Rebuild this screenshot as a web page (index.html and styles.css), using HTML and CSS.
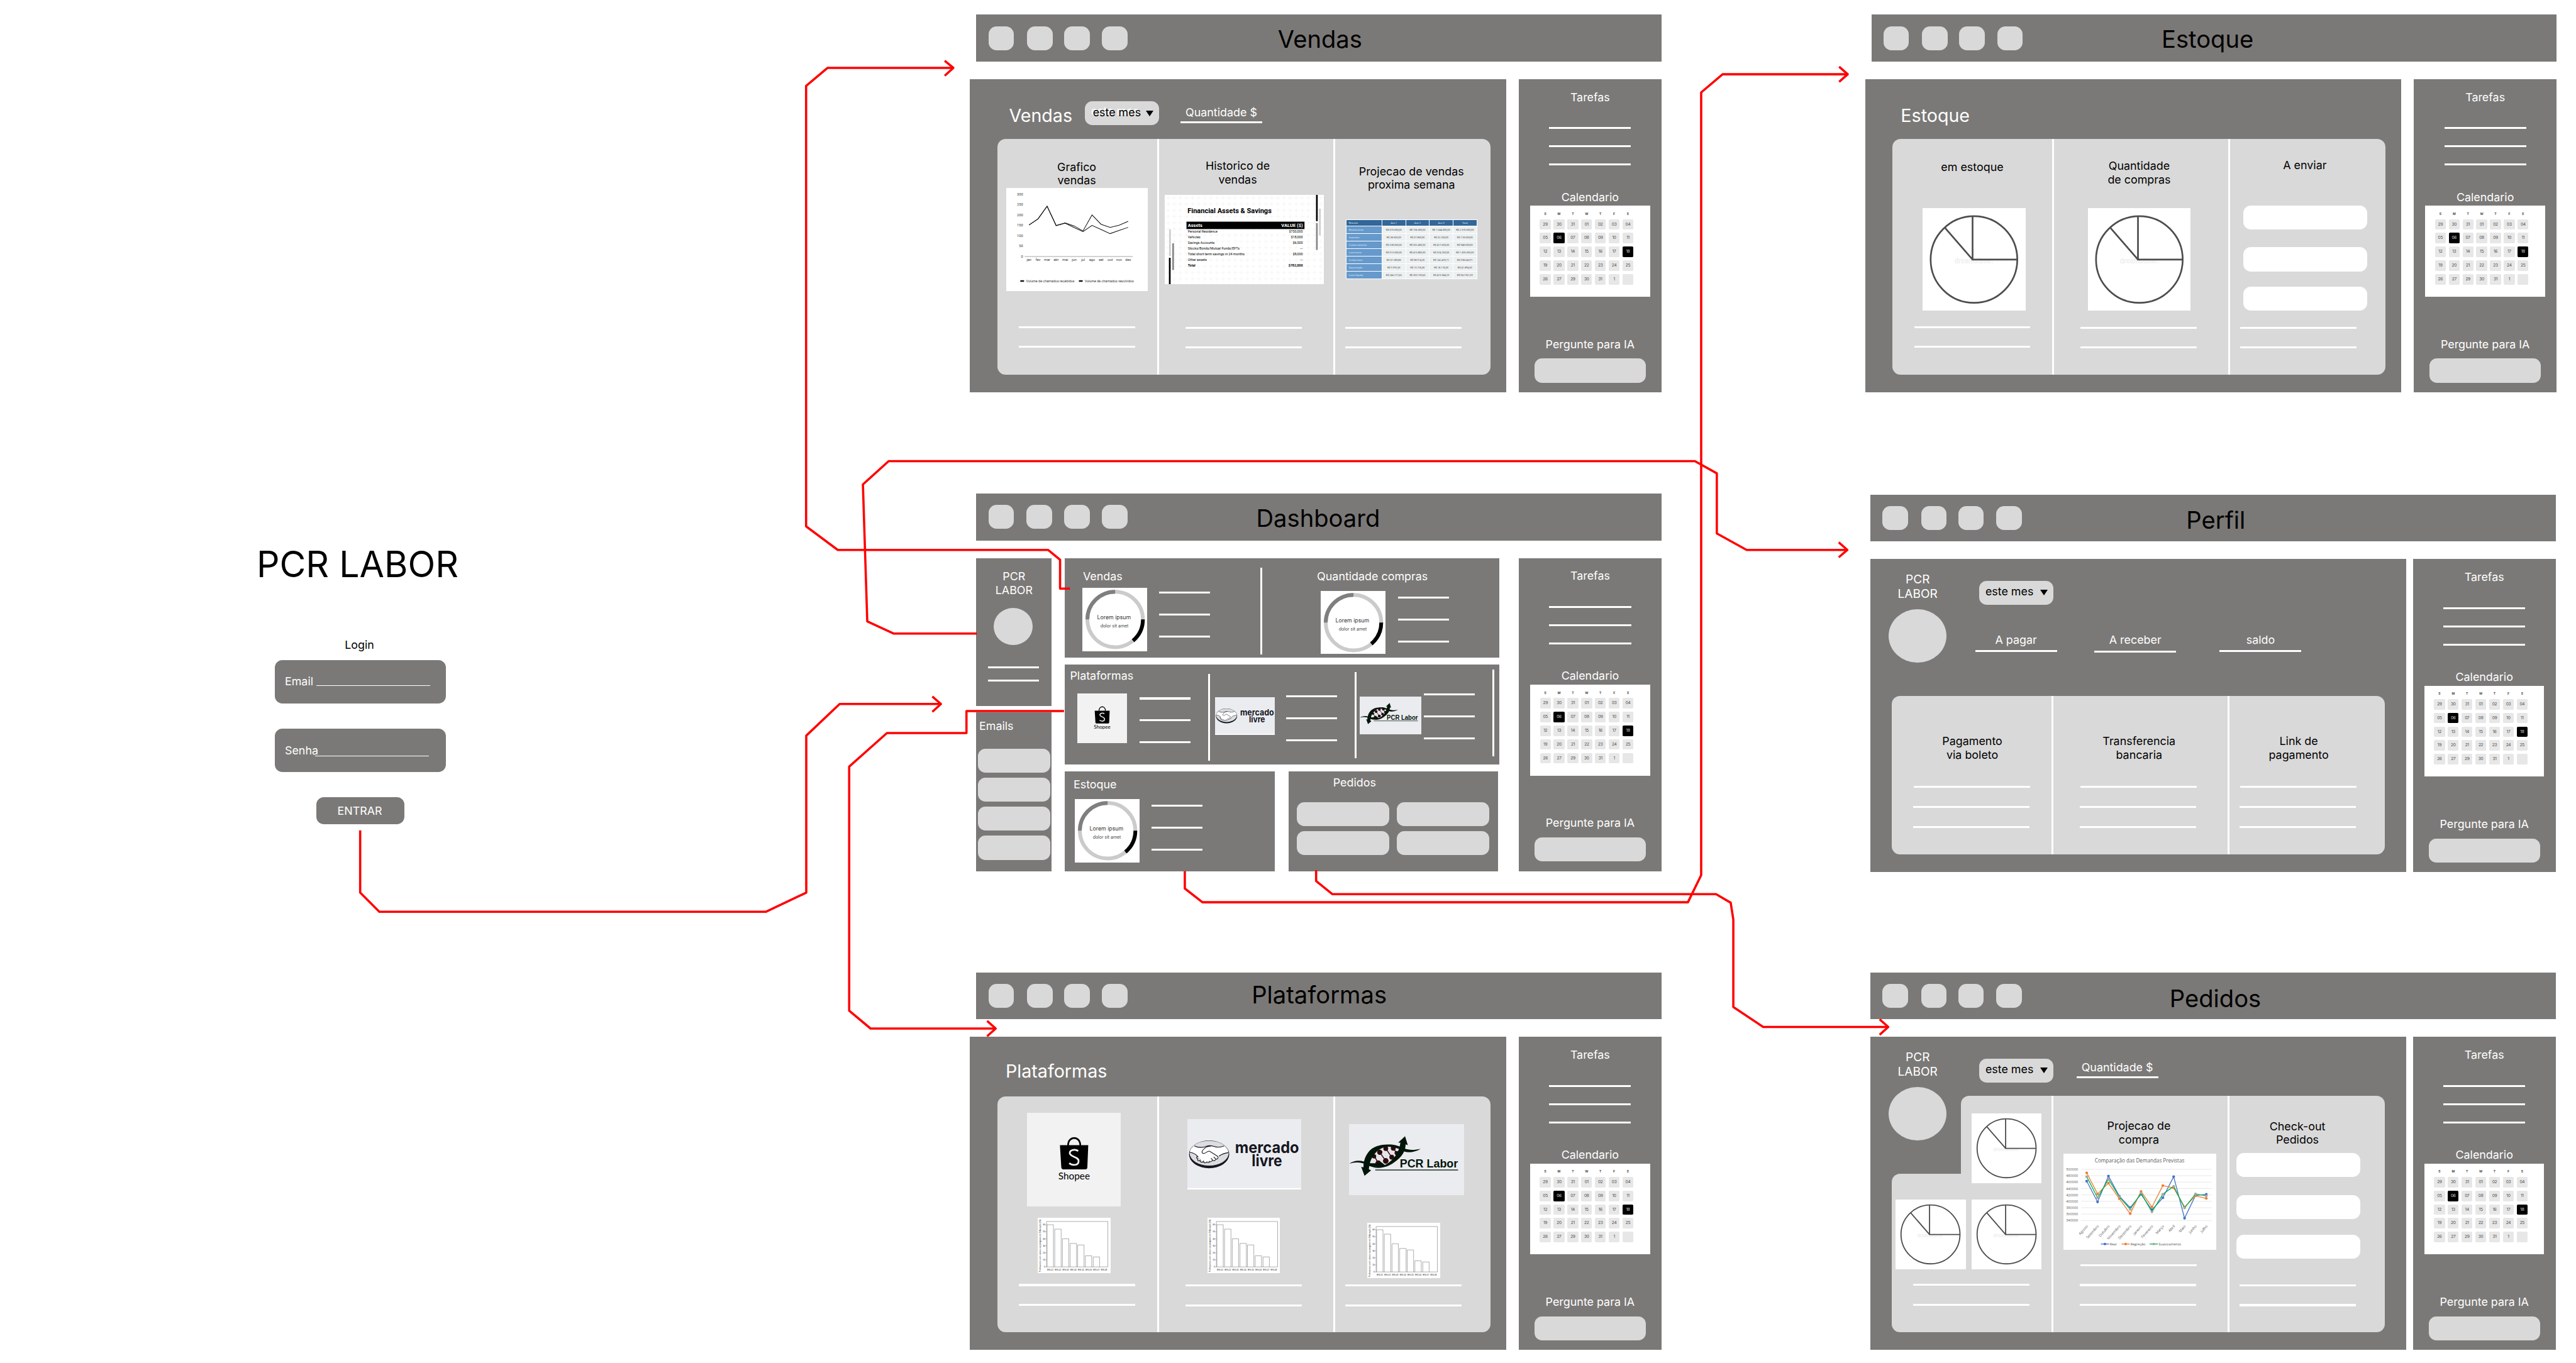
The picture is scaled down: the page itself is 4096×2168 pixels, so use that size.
FILE: index.html
```html
<!DOCTYPE html>
<html lang="pt-BR">
<head>
<meta charset="utf-8">
<title>PCR LABOR</title>
<link rel="stylesheet" href="styles.css">
</head>
<body>
<main class="board">

  <section class="login">
    <h1>PCR LABOR</h1>
    <h2>Login</h2>
    <div class="field"><span>Email</span><i></i></div>
    <div class="field field-senha"><span>Senha</span><i></i></div>
    <button class="enter">ENTRAR</button>
  </section>

  <section class="window wide vendas">
    <header class="bar"><div class="dots" data-part="dots"></div><h2>Vendas</h2></header>
    <div class="body">
      <div class="main">
        <div class="head">
          <h3>Vendas</h3>
          <div class="select"><span>este mes</span><b></b></div>
          <div class="metric">Quantidade $</div>
        </div>
        <div class="card">
          <div class="col c1">
            <h4>Grafico<br>vendas</h4>
            <div class="pic" data-part="line-chart"></div>
            <div class="rules"><i></i><i></i></div>
          </div>
          <div class="col c2">
            <h4>Historico de<br>vendas</h4>
            <div class="pic" data-part="assets"></div>
            <div class="rules"><i></i><i></i></div>
          </div>
          <div class="col c3">
            <h4>Projecao de vendas<br>proxima semana</h4>
            <div class="pic" data-part="projection"></div>
            <div class="rules"><i></i><i></i></div>
          </div>
        </div>
      </div>
      <aside class="side" data-part="side"></aside>
    </div>
  </section>

  <section class="window wide estoque">
    <header class="bar"><div class="dots" data-part="dots"></div><h2>Estoque</h2></header>
    <div class="body">
      <div class="main">
        <div class="head"><h3>Estoque</h3></div>
        <div class="card">
          <div class="col c1">
            <h4>em estoque</h4>
            <div class="pic" data-part="pie"></div>
            <div class="rules"><i></i><i></i></div>
          </div>
          <div class="col c2">
            <h4>Quantidade<br>de compras</h4>
            <div class="pic" data-part="pie"></div>
            <div class="rules"><i></i><i></i></div>
          </div>
          <div class="col c3">
            <h4>A enviar</h4>
            <div class="slots"><i></i><i></i><i></i></div>
            <div class="rules"><i></i><i></i></div>
          </div>
        </div>
      </div>
      <aside class="side" data-part="side"></aside>
    </div>
  </section>

  <section class="window dashboard">
    <header class="bar"><div class="dots" data-part="dots"></div><h2>Dashboard</h2></header>
    <div class="body">
      <div class="rail">
        <div class="profile">
          <p>PCR<br>LABOR</p>
          <div class="avatar"></div>
          <div class="short"><i></i><i></i></div>
        </div>
        <div class="emails">
          <p>Emails</p>
          <i></i><i></i><i></i><i></i>
        </div>
      </div>
      <div class="tiles">
        <div class="tile t-top">
          <div class="item i-vendas">
            <h4>Vendas</h4>
            <div class="media"><div class="pic" data-part="donut"></div><div class="short"><i></i><i></i><i></i></div></div>
          </div>
          <div class="divider"></div>
          <div class="item i-compras">
            <h4>Quantidade compras</h4>
            <div class="media"><div class="pic" data-part="donut"></div><div class="short"><i></i><i></i><i></i></div></div>
          </div>
        </div>
        <div class="tile t-plat">
          <div class="item i-shopee">
            <h4>Plataformas</h4>
            <div class="media"><div class="pic" data-part="shopee"></div><div class="short"><i></i><i></i><i></i></div></div>
          </div>
          <div class="divider"></div>
          <div class="item i-ml">
            <div class="media"><div class="pic" data-part="mercado"></div><div class="short"><i></i><i></i><i></i></div></div>
          </div>
          <div class="divider d2"></div>
          <div class="item i-pcr">
            <div class="media"><div class="pic" data-part="pcr"></div><div class="short"><i></i><i></i><i></i></div></div>
          </div>
          <div class="divider d3"></div>
        </div>
        <div class="pair">
          <div class="tile t-estoque">
            <div class="item i-estoque">
              <h4>Estoque</h4>
              <div class="media"><div class="pic" data-part="donut"></div><div class="short"><i></i><i></i><i></i></div></div>
            </div>
          </div>
          <div class="tile t-pedidos">
            <div class="item">
              <h4>Pedidos</h4>
              <div class="boxes"><i></i><i></i><i></i><i></i></div>
            </div>
          </div>
        </div>
      </div>
      <aside class="side" data-part="side"></aside>
    </div>
  </section>

  <section class="window perfil">
    <header class="bar"><div class="dots" data-part="dots"></div><h2>Perfil</h2></header>
    <div class="body">
      <div class="main">
        <div class="identity"><p>PCR<br>LABOR</p><div class="avatar"></div></div>
        <div class="head">
          <div class="select"><span>este mes</span><b></b></div>
          <div class="metrics">
            <div class="metric">A pagar</div>
            <div class="metric m2">A receber</div>
            <div class="metric m3">saldo</div>
          </div>
        </div>
        <div class="card">
          <div class="col c1"><h4>Pagamento<br>via boleto</h4><div class="rules"><i></i><i></i><i></i></div></div>
          <div class="col c2"><h4>Transferencia<br>bancaria</h4><div class="rules"><i></i><i></i><i></i></div></div>
          <div class="col c3"><h4>Link de<br>pagamento</h4><div class="rules"><i></i><i></i><i></i></div></div>
        </div>
      </div>
      <aside class="side" data-part="side"></aside>
    </div>
  </section>

  <section class="window wide plataformas">
    <header class="bar"><div class="dots" data-part="dots"></div><h2>Plataformas</h2></header>
    <div class="body">
      <div class="main">
        <div class="head"><h3>Plataformas</h3></div>
        <div class="card">
          <div class="col c1">
            <div class="pic logo" data-part="shopee"></div>
            <div class="pic bars" data-part="bars"></div>
            <div class="rules"><i></i><i></i></div>
          </div>
          <div class="col c2">
            <div class="pic logo" data-part="mercado"></div>
            <div class="pic bars" data-part="bars"></div>
            <div class="rules"><i></i><i></i></div>
          </div>
          <div class="col c3">
            <div class="pic logo" data-part="pcr"></div>
            <div class="pic bars" data-part="bars"></div>
            <div class="rules"><i></i><i></i></div>
          </div>
        </div>
      </div>
      <aside class="side" data-part="side"></aside>
    </div>
  </section>

  <section class="window pedidos">
    <header class="bar"><div class="dots" data-part="dots"></div><h2>Pedidos</h2></header>
    <div class="body">
      <div class="main">
        <div class="identity"><p>PCR<br>LABOR</p><div class="avatar"></div></div>
        <div class="head">
          <div class="select"><span>este mes</span><b></b></div>
          <div class="metric">Quantidade $</div>
        </div>
        <div class="card">
          <div class="col c1">
            <div class="step-top"><div class="pic" data-part="pie"></div></div>
            <div class="step-bottom">
              <div class="pies"><div class="pic" data-part="pie"></div><div class="pic" data-part="pie"></div></div>
              <div class="rules"><i></i><i></i></div>
            </div>
          </div>
          <div class="col c2">
            <h4>Projecao de<br>compra</h4>
            <div class="pic" data-part="demand"></div>
            <div class="rules"><i></i><i></i><i></i></div>
          </div>
          <div class="col c3">
            <h4>Check-out<br>Pedidos</h4>
            <div class="slots"><i></i><i></i><i></i></div>
            <div class="rules"><i></i><i></i></div>
          </div>
        </div>
      </div>
      <aside class="side" data-part="side"></aside>
    </div>
  </section>

  <svg class="flows" viewBox="0 0 6866 3634">
    <path d="M2852 1569.5H2825.5V1492.5L2794 1466.4H2233L2148.6 1403.5V229L2206 181H2541"/>
    <path d="M2518 162L2541 181L2518 202"/>
    <path d="M960 2214V2380L1011 2431H2042L2149 2380V1961.5L2238 1877H2508"/>
    <path d="M2485 1857L2508 1877L2485 1898"/>
    <path d="M2604 1689.4H2382.4L2311.6 1656.6L2300 1291.6L2368.6 1229.6H4517.6L4576 1262V1422.4L4655.5 1466.3H4924"/>
    <path d="M4901 1446L4924 1466.3L4901 1486"/>
    <path d="M3158 2323V2369L3205 2405.7H4499L4534.3 2333.5V246.4L4591.4 198H4925"/>
    <path d="M4902 178L4925 198L4902 218"/>
    <path d="M3508 2320V2349L3551 2384H4574L4613 2407L4620 2452V2685L4699.6 2738.2H5033"/>
    <path d="M5010 2718L5033 2738.2L5010 2759"/>
    <path d="M2836 1896H2576V1954.5H2364L2263.4 2044V2695L2320.4 2742.4H2654"/>
    <path d="M2631 2722L2654 2742.4L2631 2763"/>
  </svg>
</main>

<template id="dots"><i></i><i></i><i></i><i></i></template>

<template id="side">
  <p class="side-tasks">Tarefas</p>
  <div class="side-rules"><i></i><i></i><i></i></div>
  <p class="side-cal">Calendario</p>
  <div class="calendar">
    <b>S</b><b>M</b><b>T</b><b>W</b><b>T</b><b>F</b><b>S</b>
    <span>29</span><span>30</span><span>31</span><span>01</span><span>02</span><span>03</span><span>04</span>
    <span>05</span><span class="on">06</span><span>07</span><span>08</span><span>09</span><span>10</span><span>11</span>
    <span>12</span><span>13</span><span>14</span><span>15</span><span>16</span><span>17</span><span class="on">18</span>
    <span>19</span><span>20</span><span>21</span><span>22</span><span>23</span><span>24</span><span>25</span>
    <span>26</span><span>27</span><span>29</span><span>30</span><span>31</span><span>1</span><span></span>
  </div>
  <p class="side-ask">Pergunte para IA</p>
  <div class="side-input"></div>
</template>

<template id="pie">
  <svg viewBox="0 0 274 274" preserveAspectRatio="none" class="pie">
    <text x="85" y="147" font-size="19" textLength="104" lengthAdjust="spacingAndGlyphs" fill="#efefef">dreamstime.</text>
    <circle cx="137" cy="137" r="115.5"/>
    <path d="M133.3 22V137.4H253M59 51.7L133.3 137.4"/>
  </svg>
</template>

<template id="donut">
  <svg viewBox="0 0 173 169" preserveAspectRatio="none" class="donut">
    <circle cx="87.4" cy="84.3" r="74" stroke="#cbcbcb"/>
    <path d="M13.4 84.3A74 74 0 0 1 87.4 10.3" stroke="#7f7f7f"/>
    <path d="M161.4 84.3A74 74 0 0 1 135 141" stroke="#000"/>
    <text x="84.5" y="84.6" font-size="14.5" textLength="90" lengthAdjust="spacingAndGlyphs" fill="#333">Lorem ipsum</text>
    <text x="85.5" y="105" font-size="12" textLength="75" lengthAdjust="spacingAndGlyphs" fill="#444">dolor sit amet</text>
  </svg>
</template>

<template id="shopee">
  <svg viewBox="0 0 250 250" preserveAspectRatio="none" class="shopee">
    <path d="M87.8 86.3H163.3L160.8 146Q160.5 150.7 156 150.7H96.5Q92 150.7 91.5 146Z"/>
    <path d="M109.5 87C109.5 60.5 142 60.5 142 87" fill="none" stroke="#000" stroke-width="4.5"/>
    <path d="M136.5 102C129 96 114 98.5 114 107.5C114 118.5 137.5 116 137.5 128.5C137.5 141 121 141.5 112.5 134" fill="none" stroke="#f2f2f2" stroke-width="4.6"/>
    <text x="125.6" y="177.7" font-size="26" textLength="84" lengthAdjust="spacingAndGlyphs">Shopee</text>
  </svg>
</template>

<template id="mercado">
  <svg viewBox="0 0 303 188" preserveAspectRatio="none" class="mercado">
    <rect x="0" y="184" width="303" height="4" fill="#fff"/>
    <ellipse cx="58" cy="94" rx="53.6" ry="37" fill="#16171f"/>
    <ellipse cx="58" cy="91" rx="52" ry="33.2" fill="#dcdde1"/>
    <path d="M6.5 88C16 90 21 92 26 96L34 105C37 110 40 112 44 113L55 115.5C60 116 63 114 66 111.5L76 108C80 106 84 103 84 99C92 93 101 91 109.5 89.5C108 82 103 76 97 71.5C86 75.5 78 75 69 72C62 70 55 70.5 50 73C40 77 28 76 19 71.5C12 76 7 82 6.5 88Z" fill="#fff"/>
    <path d="M6.3 88.5C17 90.5 24 95 29 101M109.7 89.5C99 91 91 94 84 99M18.5 71.5C30 77 41 76.5 50 73C58 69.5 65 71 71 73C79 76 88 75.5 98 71.5M62 72.5C53 71.5 46 76.5 41 83C37 88 40 93 45 91.5C51 90 53 85 59 85.5L80 99C84 102 81 108 76 106.5C75 111 70 112 67 109.5C65 114 60 115 57 112.5M29 101C24 97 23 105 28 106C25 111 31 113 34 110C33 115 40 117 43 112.5C43 118 50 118.5 52 114C55 118 60 116 58.5 112M70 101L76 106.5M63 104L67.5 109.5" fill="none" stroke="#16171f" stroke-width="1.8"/>
    <text x="127" y="90" textLength="170.5" lengthAdjust="spacingAndGlyphs">mercado</text>
    <text x="171.5" y="125" textLength="81" lengthAdjust="spacingAndGlyphs">livre</text>
  </svg>
</template>

<template id="pcr">
  <svg viewBox="0 0 306.5 188" preserveAspectRatio="none" class="pcr">
    <path d="M89 61Q62 74 58 108Q75 117 92 112Q122 100 133 60Q112 54 89 61Z" fill="#e6e4ea"/>
    <path d="M82 75L98 98M68 86L78 104M98 65L114 88M118 64L127 77" stroke="#2a0a0a" stroke-width="2.5"/>
    <g fill="#2c0b0b"><circle cx="118" cy="64" r="6.5"/><circle cx="98" cy="65" r="6.5"/><circle cx="82" cy="75" r="7"/><circle cx="67" cy="86" r="5.5"/><circle cx="78" cy="104" r="7.5"/><circle cx="98" cy="98" r="7.5"/><circle cx="114" cy="88" r="6.5"/><circle cx="127" cy="77" r="5.5"/></g>
    <g fill="#02150a">
      <path d="M0.7 105.5C10 98 25 95.5 38 99C54 105 68 106 86 101L98 111C80 117 62 116 51 110C35 101 17 100 0.7 105.5Z"/>
      <path d="M93 56C117 52 132 57 148 65C161 70 176 69 191 65.5C178 74 160 77 148 73C133 66 118 58 95 61Z"/>
      <path d="M41.4 137.7L32.5 113.7L38.5 115C38 93 49 71 67 62C81 54.5 104 53 126 56C105 57 87 61 74 73C61 86 54 101 53 120.5L59 123Z"/>
      <path d="M149.4 32L131 49.5L137 49.5C135 71 121 93 104 104C93 111 79 116 62 114.5C82 120 104 114 119 103C140 88 150 75 151 54L156.8 56Z"/>
    </g>
    <text x="135.4" y="115.7" textLength="155" lengthAdjust="spacingAndGlyphs">PCR Labor</text>
    <rect x="70" y="121" width="220.7" height="2.2" fill="#02150a"/>
  </svg>
</template>

<template id="bars">
  <svg viewBox="0 0 194 146.6" preserveAspectRatio="none" class="barchart">
    <g class="frame">
      <path d="M23.7 9.9H187V131H23.7Z"/>
      <path d="M25 131V18.5H42V131M45.5 131V30.2H62.5V131M66 131V56H83V131M86.5 131V68.4H103.5V131M106.5 131V72.4H123.5V131M127 131V101.4H144V131M148 131V104.4H165V131"/>
      <path d="M20.7 18.5H23.7M20.7 37.2H23.7M20.7 56H23.7M20.7 74.7H23.7M20.7 93.5H23.7M20.7 112.2H23.7M20.7 131H23.7"/>
    </g>
    <g text-anchor="end" font-size="5.6">
      <text x="20" y="20.5">60</text><text x="20" y="39.3">50</text><text x="20" y="58">40</text><text x="20" y="76.8">30</text><text x="20" y="95.5">20</text><text x="20" y="114.2">10</text><text x="20" y="133">0</text>
    </g>
    <g text-anchor="middle" font-size="5.6">
      <text x="33.5" y="140">IES-01</text><text x="54" y="140">IES-02</text><text x="74.4" y="140">IES-03</text><text x="94.8" y="140">IES-04</text><text x="115.3" y="140">IES-05</text><text x="135.7" y="140">IES-06</text><text x="156.2" y="140">IES-07</text><text x="176.6" y="140">IES-08</text>
    </g>
    <text transform="translate(8.5 144.5) rotate(-90)" font-size="5.6" textLength="140" lengthAdjust="spacingAndGlyphs">Professores com cursos ou pesquisa em Educação (%)</text>
  </svg>
</template>

<template id="line-chart">
  <svg viewBox="0 0 377 274" preserveAspectRatio="none" class="linechart">
    <g text-anchor="end" font-size="9.5">
      <text x="44.6" y="19.8">300</text><text x="44.6" y="47.4">250</text><text x="44.6" y="75">200</text><text x="44.6" y="102.6">150</text><text x="44.6" y="130.2">100</text><text x="44.6" y="157.7">50</text><text x="44.6" y="185.3">0</text>
    </g>
    <path d="M49 182.7H337.5" stroke="#a5a5a5" stroke-width="1.8"/>
    <path d="M60.7 98.7L84.8 82.3L108.9 48.7L133 100.3L157 93L181.2 101.3L204.5 114.7L228.6 72L252.7 96.7L276.8 105L300.9 99.3L325 88.7"/>
    <path d="M60.7 98.7L84.8 82.3L108.9 48.7L133 100.3L157 94L181.2 105.7L204.5 116.3L228.6 100L252.7 110.7L276.8 121.7L300.9 113.3L325 105"/>
    <g text-anchor="middle" font-size="9.5">
      <text x="60.7" y="194">jan</text><text x="84.8" y="194">fev</text><text x="108.9" y="194">mar</text><text x="133" y="194">abr</text><text x="157" y="194">mai</text><text x="181" y="194">jun</text><text x="204.8" y="194">jul</text><text x="228.8" y="194">ago</text><text x="252.8" y="194">set</text><text x="276.9" y="194">out</text><text x="301" y="194">nov</text><text x="325" y="194">dez</text>
    </g>
    <path d="M37.5 248H47.5M193.7 248H203.7" class="mark"/>
    <text x="52.7" y="251" font-size="9.5" textLength="129.5" lengthAdjust="spacingAndGlyphs">Volume de chamados recebidos</text>
    <text x="209" y="251" font-size="9.5" textLength="131" lengthAdjust="spacingAndGlyphs">Volume de chamados resolvidos</text>
  </svg>
</template>

<template id="assets">
  <svg viewBox="0 0 424 238" preserveAspectRatio="none" class="assets">
    <defs><pattern id="dash-grid" x="0.9" y="-0.6" width="16.25" height="16.6" patternUnits="userSpaceOnUse"><path d="M8.1 0V16.6M0 8.3H16.25" stroke="#ededed" stroke-width="1" stroke-dasharray="11 5.4" stroke-dashoffset="-3"/></pattern></defs>
    <rect width="424" height="238" fill="url(#dash-grid)"/>
    <path d="M405.5 0V70M13.4 167.3V238" stroke="#000" stroke-width="4.5"/>
    <path d="M405.5 75V146.7M22.3 129V200" stroke="#858585" stroke-width="4.5"/>
    <path d="M413.5 37V108M14 91.7V162.7" stroke="#cdcdcd" stroke-width="4.5"/>
    <text x="60.7" y="48.3" font-size="19.5" font-weight="700" textLength="224" lengthAdjust="spacingAndGlyphs">Financial Assets &amp; Savings</text>
    <rect x="58" y="71.3" width="314.5" height="19.7" fill="#000"/>
    <g fill="#fff" font-weight="700" font-size="12">
      <text x="61.6" y="85.2" textLength="38.6" lengthAdjust="spacingAndGlyphs">Assets</text>
      <text x="310.7" y="85.2" textLength="57.5" lengthAdjust="spacingAndGlyphs">VALUE ($)</text>
    </g>
    <g font-size="9">
      <text x="61.6" y="101">Personal Residence</text><text x="61.6" y="116">Vehicles</text><text x="61.6" y="131">Savings Accounts</text><text x="61.6" y="145.8">Stocks/Bonds/Mutual Funds/EFTs</text><text x="61.6" y="160.8">Total short term savings in 24 months</text><text x="61.6" y="175.8">Other assets</text><text x="61.6" y="190.7" font-weight="700">Total</text>
    </g>
    <g font-size="9" text-anchor="end">
      <text x="368" y="101">$750,000</text><text x="368" y="116">$18,000</text><text x="368" y="131">$6,500</text><text x="368" y="145.8">---</text><text x="368" y="160.8">$8,000</text><text x="368" y="175.8">---</text><text x="368" y="190.7" font-weight="700">$782,000</text>
    </g>
  </svg>
</template>

<template id="projection">
  <table class="projection">
    <tr><th>Resumo</th><th>Ano 1</th><th>Ano 2</th><th>Ano 3</th><th>Total</th></tr>
    <tr><td>Receita bruta</td><td>R$ 570.000,00</td><td>R$ 756.000,00</td><td>R$ 1.044.000,00</td><td>R$ 2.370.000,00</td></tr>
    <tr><td>Impostos</td><td>R$ 28.500,00</td><td>R$ 37.800,00</td><td>R$ 52.200,00</td><td>R$ 118.500,00</td></tr>
    <tr><td>Custos variaveis</td><td>R$ 228.000,00</td><td>R$ 302.400,00</td><td>R$ 417.600,00</td><td>R$ 948.000,00</td></tr>
    <tr><td>Lucro bruto</td><td>R$ 313.500,00</td><td>R$ 415.800,00</td><td>R$ 574.200,00</td><td>R$ 1.303.500,00</td></tr>
    <tr><td>Custos fixos</td><td>R$ 57.289,85</td><td>R$ 98.914,35</td><td>R$ 142.439,71</td><td>R$ 298.643,91</td></tr>
    <tr><td>Depreciação</td><td>R$ 9.992,50</td><td>R$ 13.726,00</td><td>R$ 18.176,00</td><td>R$ 41.894,50</td></tr>
    <tr><td>Lucro líquido</td><td>R$ 246.217,65</td><td>R$ 303.159,65</td><td>R$ 413.584,29</td><td>R$ 962.961,59</td></tr>
  </table>
</template>

<template id="demand">
  <svg viewBox="0 0 406.6 257.5" preserveAspectRatio="none" class="demand">
    <text x="83.5" y="24" font-size="14" textLength="239" lengthAdjust="spacingAndGlyphs">Comparação das Demandas Previstas</text>
    <path d="M47 41.8H395.5M47 58.8H395.5M47 75.9H395.5M47 92.9H395.5M47 110H395.5M47 127H395.5M47 144.1H395.5M47 161.1H395.5M47 178.2H395.5" stroke="#d9d9d9" stroke-width="1"/>
    <g class="ylabels" font-size="9.5"></g>
    <g class="series"></g>
    <g class="months" font-size="9.8"></g>
    <g class="legend" font-size="9.2"></g>
  </svg>
</template>

<script src="script.js"></script>
</body>
</html>
```

FILE: styles.css
```css
/* 1rem equals 100 board units; the board is 68.66 x 36.34 rem */
html { font-size: 59.656px; }
* { box-sizing: border-box; }
body, h1, h2, h3, h4, p { margin: 0; font-weight: 400; }
body { background: #fff; font-family: Inter, "Liberation Sans", sans-serif; font-size: .3rem; line-height: 1.21; color: #fff; }
h4 { font-size: .3rem; }
svg { display: block; }
i, b { font-style: normal; }

.board { position: relative; width: 68.66rem; height: 36.34rem; overflow: hidden; }
.flows { position: absolute; left: 0; top: 0; width: 68.66rem; height: 36.34rem; }
.flows path { fill: none; stroke: #f00; stroke-width: 6; stroke-linejoin: round; }

/* Login */
.login { position: absolute; left: 6.8rem; top: 14.46rem; width: 5.56rem; display: flex; flex-direction: column; align-items: center; color: #000; }
.login h1 { font-size: .96rem; line-height: 1.16rem; white-space: nowrap; margin-left: -.1rem; }
.login h2 { font-size: .3rem; line-height: .36rem; margin-top: 1.39rem; }
.field { width: 4.564rem; height: 1.157rem; border-radius: .2rem; background: #7b7977; color: #fff; margin-top: .225rem; margin-left: .04rem; padding: .4rem 0 0 .275rem; display: flex; }
.field span { width: .837rem; line-height: .36rem; }
.field i { width: 3.03rem; height: .01rem; min-height: 1px; background: #fff; margin-top: .285rem; }
.field-senha { margin-top: .67rem; padding-top: .41rem; }
.field-senha span { width: .81rem; }
.field-senha i { margin-top: .32rem; }
.enter { width: 2.333rem; height: .72rem; margin-top: .67rem; margin-left: .05rem; border: 0; border-radius: .2rem; background: #7b7977; color: #fff; font: inherit; padding: .03rem .03rem 0 0; }

/* Windows */
.window { position: absolute; width: 18.265rem; display: flex; flex-direction: column; gap: .468rem; }
.wide { width: 18.43rem; }
.vendas { left: 25.855rem; top: .393rem; }
.estoque { left: 49.713rem; top: .393rem; }
.dashboard { left: 26.022rem; top: 13.162rem; }
.perfil { left: 49.854rem; top: 13.19rem; }
.plataformas { left: 25.855rem; top: 25.93rem; }
.pedidos { left: 49.854rem; top: 25.93rem; }

.bar { height: 1.248rem; background: #7b7977; display: grid; align-items: center; }
.wide .bar { margin-left: .165rem; }
.bar > * { grid-area: 1 / 1; }
.bar h2 { justify-self: center; color: #000; font-size: .64rem; line-height: .78rem; padding: .04rem 0 0 .06rem; }
.estoque h2 { padding-left: 0; padding-right: .34rem; }
.dashboard h2 { padding: .06rem .04rem 0 0; }
.perfil h2 { padding: .12rem 0 0 .15rem; }
.plataformas h2 { padding: 0 0 .06rem .02rem; }
.pedidos h2 { padding: .14rem 0 0 .12rem; }
.dots { display: flex; gap: .33rem; padding-left: .325rem; }
.dots i { width: .68rem; height: .64rem; border-radius: .21rem; background: #d9d9d9; }
.dots i:nth-child(2) { margin: 0 -.02rem 0 .02rem; }
.dashboard .dots i { margin: 0; }

.body { display: flex; height: 8.352rem; }
.main { width: 14.285rem; background: #7b7977; }

.side { width: 3.805rem; margin-left: auto; background: #7b7977; display: flex; flex-direction: column; align-items: center; }
.side p { line-height: .36rem; }
.side-tasks { margin-top: .3rem; }
.side-rules { margin-top: .62rem; display: flex; flex-direction: column; gap: .436rem; }
.side-rules i { width: 2.18rem; height: .051rem; background: #fff; }
.side-cal { margin-top: .66rem; }
.calendar { width: 3.19rem; height: 2.425rem; margin-top: .055rem; background: #fff; padding: .175rem 0 0 .255rem; display: grid; grid-template-columns: repeat(7, .29rem); grid-template-rows: .095rem repeat(5, .28rem); column-gap: .0775rem; row-gap: .086rem; color: #4a4a4a; font-size: .11rem; text-align: center; }
.calendar b { font-size: .085rem; line-height: .1rem; }
.calendar span { background: #e7e7e7; border-radius: .03rem; line-height: .27rem; letter-spacing: -.005rem; }
.calendar .on { background: #000; color: #ddd; }
.side-ask { margin-top: 1.085rem; }
.side-input { width: 2.97rem; height: .64rem; margin-top: .205rem; border-radius: .2rem; background: #d9d9d9; }

/* Panel heads */
.head h3 { font-size: .48rem; line-height: .58rem; }
.wide .head { height: 1.59rem; display: grid; grid-template-columns: 3.053rem 1.985rem 1fr; align-items: start; }
.vendas h3 { margin: .685rem 0 0 1.04rem; }
.estoque h3 { margin: .685rem 0 0 .95rem; }
.plataformas h3 { margin: .625rem 0 0 .95rem; }
.select { width: 1.98rem; height: .64rem; border-radius: .2rem; background: #d9d9d9; color: #000; display: flex; padding: .1rem 0 0 .165rem; line-height: .36rem; }
.select span { width: 1.46rem; }
.select b { width: 0; height: 0; margin-top: .13rem; border: .102rem solid transparent; border-top: .152rem solid #000; border-bottom: 0; }
.vendas .select { width: 1.987rem; margin-top: .583rem; padding: .13rem 0 0 .22rem; }
.vendas .select span { width: 1.42rem; text-shadow: -.05rem -.04rem 0 #fff; }
.metric { width: 2.18rem; text-align: center; line-height: .36rem; padding-bottom: .065rem; border-bottom: .051rem solid #fff; }
.vendas .metric { margin: .706rem 0 0 .57rem; }

/* Three-column cards */
.card { width: 13.15rem; height: 6.29rem; margin-left: .725rem; border-radius: .22rem; background: #d9d9d9; color: #000; display: grid; grid-template-columns: 4.26rem 4.69rem 4.2rem; overflow: hidden; }
.col { display: flex; flex-direction: column; align-items: flex-start; }
.c2, .c3 { border-left: .051rem solid #fff; }
.col h4 { text-align: center; line-height: .363rem; white-space: nowrap; }
.rules { display: flex; flex-direction: column; gap: .48rem; }
.rules i { width: 3.1rem; height: .051rem; background: #fff; }
.c1 .rules { margin-left: .58rem; }
.c2 .rules { margin-left: .71rem; }
.c3 .rules { margin-left: .27rem; }
.pic { flex: none; background: #fff; }
.pic svg { width: 100%; height: 100%; }

.vendas .c1 h4 { width: 4.24rem; margin-top: .569rem; }
.vendas .c1 .pic { width: 3.77rem; height: 2.74rem; margin: .025rem 0 0 .244rem; }
.vendas .c1 .rules { margin-top: .938rem; }
.vendas .c2 h4 { width: 4.2rem; margin-top: .549rem; }
.vendas .c2 .pic { width: 4.24rem; height: 2.383rem; margin: .225rem 0 0 .15rem; }
.vendas .c2 .rules { margin-top: 1.129rem; }
.vendas .c3 h4 { width: 4.08rem; margin-top: .686rem; }
.vendas .c3 .pic { width: 3.49rem; height: 1.586rem; margin: .748rem 0 0 .3rem; }
.vendas .c3 .rules { margin-top: 1.266rem; }

.estoque .pic { width: 2.74rem; height: 2.74rem; }
.estoque .c1 h4 { width: 4.26rem; margin-top: .569rem; }
.estoque .c1 .pic { margin: .918rem 0 0 .81rem; }
.estoque .c1 .rules { margin-top: .408rem; }
.estoque .c2 h4 { width: 4.54rem; margin-top: .549rem; }
.estoque .c2 .pic { margin: .575rem 0 0 .9rem; }
.estoque .c2 .rules { margin-top: .422rem; }
.estoque .c3 h4 { width: 3.99rem; margin-top: .534rem; }
.slots { display: flex; flex-direction: column; }
.slots i { width: 3.3rem; height: .64rem; border-radius: .2rem; background: #fff; }
.slots i:nth-child(2) { margin: .478rem 0 .413rem; }
.estoque .slots { margin: .883rem 0 0 .35rem; }
.estoque .c3 .rules { margin-top: .422rem; }

.plataformas .bars { width: 1.94rem; height: 1.466rem; }
.plataformas .c1 .logo { width: 2.5rem; height: 2.5rem; margin: .43rem 0 0 .8rem; }
.plataformas .c1 .bars { margin: .31rem 0 0 1.08rem; }
.plataformas .c1 .rules { margin-top: .297rem; }
.plataformas .c2 .logo { width: 3.03rem; height: 1.88rem; margin: .596rem 0 0 .756rem; }
.plataformas .c2 .bars { margin: .764rem 0 0 1.29rem; }
.plataformas .c2 .rules { margin-top: .309rem; }
.plataformas .c3 .logo { width: 3.065rem; height: 1.884rem; margin: .74rem 0 0 .38rem; }
.plataformas .c3 .bars { margin: .746rem 0 0 .865rem; }
.plataformas .c3 .rules { margin-top: .179rem; }

/* Perfil and Pedidos: identity block beside the head, card underneath */
.perfil .main, .pedidos .main { display: grid; grid-template-columns: 2.52rem 1fr; }
.perfil .main { grid-template-rows: 3.65rem 1fr; }
.pedidos .main { grid-template-rows: 1.573rem 1fr; }
.identity { grid-area: 1 / 1 / 3 / 2; display: flex; flex-direction: column; align-items: center; padding-top: .345rem; }
.identity p { font-size: .32rem; line-height: .39rem; text-align: center; }
.avatar { border-radius: 50%; background: #d9d9d9; }
.identity .avatar { width: 1.55rem; height: 1.44rem; margin-top: .205rem; }
.perfil .head, .pedidos .head { grid-area: 1 / 2; padding: .58rem 0 0 .38rem; }
.pedidos .head { display: flex; }
.pedidos .metric { margin: .046rem 0 0 .61rem; height: .475rem; }
.perfil .card, .pedidos .card { grid-area: 2 / 1 / 3 / 3; margin-left: .566rem; }
.metrics { display: flex; align-items: flex-start; margin: .76rem 0 0 -.11rem; }
.metrics .metric { padding-bottom: .095rem; }
.metrics .m2 { margin: -.01rem 1.16rem 0 1rem; padding-bottom: .122rem; }
.perfil .card { height: 4.23rem; }
.perfil .col h4 { margin-top: 1.03rem; width: 4.3rem; }
.perfil .c2 h4 { width: 4.57rem; }
.perfil .c3 h4 { width: 3.7rem; }
.perfil .rules { margin-top: .64rem; gap: .486rem; }
.perfil .rules i:first-child, .pedidos .c2 .rules i:first-child { margin-left: .018rem; }

.pedidos .card { height: 6.31rem; background: none; overflow: visible; }
.pedidos .c2, .pedidos .c3 { background: #d9d9d9; }
.pedidos .c3 { border-radius: 0 .22rem .22rem 0; }
.step-top { width: 2.42rem; height: 2.08rem; margin-left: 1.84rem; padding: .466rem 0 0 .284rem; background: #d9d9d9; border-radius: .22rem 0 0 0; }
.step-bottom { width: 4.26rem; height: 4.23rem; padding-top: .687rem; background: #d9d9d9; border-radius: .22rem 0 0 .22rem; }
.pedidos .c1 .pic { width: 1.864rem; height: 1.86rem; position: relative; z-index: 1; }
.pies { display: flex; gap: .154rem; margin-left: .11rem; }
.pedidos .c1 .rules { margin-top: .388rem; }
.pedidos .c2 h4 { width: 4.56rem; margin-top: .619rem; }
.pedidos .c2 .pic { width: 4.066rem; height: 2.575rem; margin: .19rem 0 0 .27rem; }
.pedidos .c2 .rules { margin-top: .375rem; gap: .484rem; }
.pedidos .c3 h4 { width: 3.63rem; margin-top: .629rem; }
.pedidos .slots { margin: .175rem 0 0 .19rem; }
.pedidos .c3 .rules { margin-top: .685rem; }

/* Dashboard */
.rail { width: 2.012rem; display: flex; flex-direction: column; gap: .172rem; text-align: center; }
.profile { height: 3.94rem; background: #7b7977; padding-top: .308rem; display: flex; flex-direction: column; align-items: center; }
.profile .avatar { width: 1.04rem; height: .98rem; margin-top: .3rem; margin-right: .03rem; }
.profile .short { margin: .575rem .03rem 0 0; gap: .3rem; }
.emails { flex: 1; background: #7b7977; padding: .18rem .048rem 0; display: flex; flex-direction: column; gap: .133rem; }
.emails p { text-align: left; padding-left: .03rem; line-height: .363rem; margin-bottom: .301rem; }
.emails i, .boxes i { height: .64rem; border-radius: .2rem; background: #d9d9d9; }
.tiles { margin-left: .34rem; width: 11.6rem; display: flex; flex-direction: column; gap: .18rem; }
.tile { width: 11.585rem; height: 2.663rem; background: #7b7977; display: flex; align-items: flex-start; }
.t-plat { margin-left: .012rem; }
.pair { display: flex; gap: .36rem; }
.t-estoque { width: 5.61rem; }
.t-pedidos { width: 5.586rem; }
.divider { width: .05rem; height: 2.31rem; margin-top: .255rem; background: #fff; }
.d2 { margin-top: .193rem; }
.d3 { margin-top: .13rem; }
.item h4 { line-height: .363rem; }
.media { display: flex; align-items: flex-start; }
.short { display: flex; flex-direction: column; gap: .535rem; }
.short i { width: 1.357rem; height: .051rem; background: #fff; }
.i-vendas, .i-compras { padding-top: .308rem; }
.i-vendas .pic, .i-compras .pic, .i-estoque .pic { width: 1.73rem; height: 1.69rem; }
.i-vendas { width: 5.22rem; padding-left: .47rem; }
.i-vendas h4 { padding-left: .02rem; }
.i-vendas .media { margin-top: .133rem; }
.i-vendas .short { margin: .095rem 0 0 .32rem; }
.i-compras { padding-left: 1.46rem; }
.i-compras .media { margin: .202rem 0 0 .1rem; }
.i-compras .short { margin: .157rem 0 0 .33rem; }
.i-shopee { width: 3.82rem; padding: .115rem 0 0 .135rem; }
.i-shopee .media { margin: .292rem 0 0 .192rem; }
.i-shopee .pic { width: 1.32rem; height: 1.33rem; }
.i-shopee .short { margin: .108rem 0 0 .34rem; }
.i-ml { width: 3.85rem; padding-left: .13rem; }
.i-ml .pic { width: 1.6rem; height: 1rem; margin-top: .875rem; }
.i-ml .short { margin: .823rem 0 0 .29rem; }
.i-pcr { width: 3.625rem; padding-left: .085rem; }
.i-pcr .pic { width: 1.636rem; height: 1rem; margin-top: .855rem; }
.i-pcr .short { margin: .765rem 0 0 .074rem; }
.i-estoque { padding: .177rem 0 0 .24rem; }
.i-estoque .media { margin: .204rem 0 0 .026rem; }
.i-estoque .short { margin: .154rem 0 0 .33rem; }
.t-pedidos h4 { margin: .13rem 0 0 1.19rem; }
.boxes { display: grid; grid-template-columns: 2.47rem 2.46rem; gap: .133rem .206rem; margin: .328rem 0 0 .218rem; }

/* Pictures */
.pie circle, .pie path { fill: none; stroke: #4d4d4d; stroke-width: 4.5; }
.pie text { font-family: Inter, sans-serif; font-weight: 700; }
.donut circle, .donut path { fill: none; stroke-width: 10; }
.donut text { text-anchor: middle; font-family: Inter, sans-serif; }
.shopee { background: #f2f2f2; }
.shopee text { text-anchor: middle; font-family: Lato, sans-serif; }
.mercado { background: #ebecf0; }
.mercado text { font-family: Inter, sans-serif; font-weight: 700; font-size: 43px; fill: #16171f; }
.pcr { background: #ebecf0; }
.pcr text { font-family: "Liberation Sans", sans-serif; font-weight: 700; font-size: 32px; fill: #02150a; }
.barchart .frame path { fill: none; stroke: #777; stroke-width: 1; }
.barchart text { font-family: "Liberation Sans", sans-serif; fill: #222; }
.linechart path { fill: none; stroke: #111; stroke-width: 1.7; }
.linechart path[stroke] { stroke: #a5a5a5; }
.linechart .mark { stroke-width: 4; }
.linechart text { font-family: Roboto, sans-serif; fill: #333; }
.assets text { font-family: Roboto, sans-serif; }
.projection { width: 100%; height: 100%; border-collapse: separate; border-spacing: .026rem .02rem; table-layout: fixed; font-family: Roboto, sans-serif; font-size: .066rem; line-height: 1; color: #444; text-align: center; }
.projection th, .projection td { padding: 0; white-space: nowrap; font-weight: 400; background: #ecf0f1; height: .177rem; }
.projection th { background: #336699; color: #dde6ee; height: .145rem; }
.projection tr > :first-child { width: .93rem; text-align: left; padding-left: .055rem; }
.projection td:first-child { background: #6699cc; color: #dce8f4; }
.demand text { font-family: "Open Sans", sans-serif; fill: #595959; }
.demand polyline { fill: none; stroke-width: 2.2; stroke-linejoin: round; }
```

FILE: script.js
```js
// Fill every slot with a copy of its shared part
document.querySelectorAll('[data-part]').forEach(function (slot) {
  var part = document.getElementById(slot.dataset.part);
  slot.append(part.content.cloneNode(true));
});

// Demand chart on the Pedidos window
(function () {
  var NS = 'http://www.w3.org/2000/svg';
  var chart = document.querySelector('.demand');
  function add(parent, name, attrs, text) {
    var el = document.createElementNS(NS, name);
    Object.keys(attrs).forEach(function (k) { el.setAttribute(k, attrs[k]); });
    if (text) el.textContent = text;
    parent.append(el);
  }
  var xAt = function (i) { return 62 + i * 28.98; };
  var yAt = function (v) { return 41.8 + (500 - v) * 0.8525; };

  var labels = chart.querySelector('.ylabels');
  for (var v = 500; v >= 340; v -= 20) {
    add(labels, 'text', { x: 7, y: yAt(v) + 3.5, textLength: 32, lengthAdjust: 'spacingAndGlyphs' }, v + '000');
  }

  var months = ['Agosto', 'Setembro', 'Outubro', 'Novembro', 'Dezembro', 'Janeiro', 'Fevereiro', 'Março', 'Abril', 'Maio', 'Junho', 'Julho'];
  months.forEach(function (m, i) {
    add(chart.querySelector('.months'), 'text', { transform: 'translate(' + (xAt(i) + 4) + ' 194) rotate(-48)', 'text-anchor': 'end' }, m);
  });

  var series = [
    { name: 'Real', line: '#4472c4', dot: '#4472c4', x: 99.5, values: [463, 398, 479, 416, 380, 422, 373, 411, 477, 347, 418, 422] },
    { name: 'Regreção', line: '#ed7d31', dot: '#ed7d31', x: 154.8, values: [489, 423, 457, 408, 361, 431, 382, 449, 442, 382, 417, 409] },
    { name: 'Suavizamento', line: '#00b050', dot: '#a5a5a5', x: 229.7, values: [477, 411, 469, 414, 375, 426, 367, 422, 447, 379, 423, 417] }
  ];
  series.forEach(function (s) {
    var g = chart.querySelector('.series');
    var pts = s.values.map(function (v, i) { return xAt(i) + ',' + yAt(v); });
    add(g, 'polyline', { points: pts.join(' '), stroke: s.line });
    s.values.forEach(function (v, i) { add(g, 'circle', { cx: xAt(i), cy: yAt(v), r: 3.6, fill: s.dot }); });
    var legend = chart.querySelector('.legend');
    add(legend, 'path', { d: 'M' + s.x + ' 241h22', stroke: s.line, 'stroke-width': 2.2 });
    add(legend, 'circle', { cx: s.x + 11, cy: 241, r: 3.4, fill: s.dot });
    add(legend, 'text', { x: s.x + 24, y: 244.5 }, s.name);
  });
})();
```
